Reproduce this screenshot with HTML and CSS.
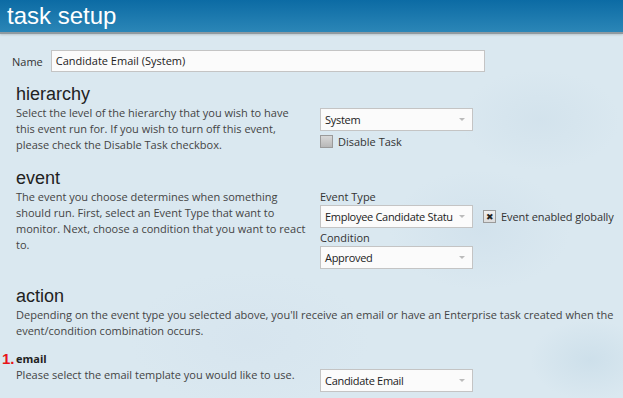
FILE: index.html
```html
<!DOCTYPE html>
<html>
  <head>
    <meta charset="utf-8">
    <title>task setup</title>
    <link rel="stylesheet" href="styles.css">
  </head>
  <body>
    <div class="hdr">task setup</div>
    <div class="page">
      <div class="namerow">
        <span class="lbl">Name</span>
        <div class="inp wide">Candidate Email (System)</div>
      </div>

      <div class="sec">
        <div class="h">hierarchy</div>
        <div class="row">
          <div class="txt">Select the level of the hierarchy that you wish to have this event run for. If you wish to turn off this event, please check the Disable Task checkbox.</div>
          <div class="ctl">
            <div class="inp sel">System<span class="arr"></span></div>
            <div class="chk"><span class="box"></span>Disable Task</div>
          </div>
        </div>
      </div>

      <div class="sec ev">
        <div class="h">event</div>
        <div class="row">
          <div class="txt">The event you choose determines when something should run. First, select an Event Type that want to monitor. Next, choose a condition that you want to react to.</div>
          <div class="ctl">
            <div class="lab">Event Type</div>
            <div class="pair">
              <div class="inp sel">Employee Candidate Statu<span class="arr"></span></div>
              <div class="chk on"><span class="box">&#x2716;</span>Event enabled globally</div>
            </div>
            <div class="lab">Condition</div>
            <div class="inp sel">Approved<span class="arr"></span></div>
          </div>
        </div>
      </div>

      <div class="sec act">
        <div class="h">action</div>
        <div class="txt full">Depending on the event type you selected above, you'll receive an email or have an Enterprise task created when the event/condition combination occurs.</div>
        <div class="sub">
          <span class="num">1.</span>
          <div class="sh">email</div>
          <div class="row">
            <div class="txt">Please select the email template you would like to use.</div>
            <div class="ctl">
              <div class="inp sel">Candidate Email<span class="arr"></span></div>
            </div>
          </div>
        </div>
      </div>
    </div>
  </body>
</html>
```

FILE: styles.css
```css
body {
  margin: 0;
  width: 623px;
  height: 398px;
  overflow: hidden;
  font-family: "Open Sans", "Noto Sans", sans-serif;
  font-size: 11px;
  color: #444;
  background-color: #dae8f0;
  background-image:
    radial-gradient(ellipse 60px 40px at 590px 360px, rgba(200,220,232,0.7), transparent),
    radial-gradient(ellipse 90px 60px at 480px 230px, rgba(205,222,234,0.6), transparent),
    radial-gradient(ellipse 120px 70px at 250px 340px, rgba(214,228,238,0.8), transparent),
    radial-gradient(ellipse 80px 50px at 540px 120px, rgba(206,223,234,0.6), transparent);
}
.hdr {
  height: 34px;
  padding-left: 7px;
  box-sizing: border-box;
  font-family: "Liberation Sans", Arial, sans-serif;
  font-size: 24px;
  line-height: 32px;
  color: #fff;
  background: linear-gradient(#0c6ba4, #2b86b7);
  border-bottom: 2px solid #8f9aa0;
  box-shadow: 0 1px 2px rgba(0,0,0,0.15);
}
.page {
  padding: 16px 0 0 16px;
  position: relative;
}
.namerow {
  display: flex;
  align-items: center;
  margin-left: -4px;
  gap: 8px;
}
.lbl {
  color: #333;
}
.inp {
  height: 22px;
  box-sizing: border-box;
  border: 1px solid #c4c4c4;
  background: #fbfbfb;
  padding-left: 4px;
  line-height: 20px;
  color: #222;
  white-space: nowrap;
  overflow: hidden;
  position: relative;
}
.wide {
  width: 434px;
}
.sel {
  width: 153px;
  height: 23px;
  line-height: 21px;
  letter-spacing: -0.3px;
}
.arr {
  position: absolute;
  right: 7px;
  top: 9px;
  border-left: 3px solid transparent;
  border-right: 3px solid transparent;
  border-top: 3px solid #bbb;
}
.sec {
  margin-top: 11px;
}
.h {
  font-family: "Liberation Sans", Arial, sans-serif;
  font-size: 18px;
  line-height: 22px;
  color: #222;
}
.row {
  display: flex;
}
.txt {
  width: 292px;
  line-height: 16px;
}
.full {
  width: 600px;
}
.ctl {
  margin-left: 12px;
  margin-top: 3px;
}
.chk {
  display: flex;
  align-items: center;
  gap: 5px;
  margin-top: 3px;
  color: #333;
}
.box {
  width: 13px;
  height: 13px;
  box-sizing: border-box;
  border: 1px solid #9a9a9a;
  background: linear-gradient(#d8d8d8, #b8b8b8);
  font-size: 9px;
  line-height: 11px;
  text-align: center;
  color: #222;
}
.on .box {
  background: linear-gradient(#f0f0f0, #dcdcdc);
}
.ev {
  margin-top: 14px;
}
.ev .ctl {
  margin-top: 0;
}
.lab {
  line-height: 16px;
  color: #333;
}
.pair {
  display: flex;
  align-items: center;
  gap: 10px;
  margin-bottom: 2px;
}
.pair .chk {
  margin-top: 0;
  letter-spacing: -0.1px;
}
.act {
  margin-top: 16px;
}
.sub {
  margin-top: 12px;
}
.sh {
  font-weight: bold;
  color: #222;
  line-height: 16px;
}
.num {
  position: absolute;
  left: 2px;
  margin-top: -1px;
  font-family: "Liberation Sans", Arial, sans-serif;
  font-weight: bold;
  font-size: 15px;
  color: #e8141a;
}
.sub .ctl {
  margin-top: 2px;
}
```
